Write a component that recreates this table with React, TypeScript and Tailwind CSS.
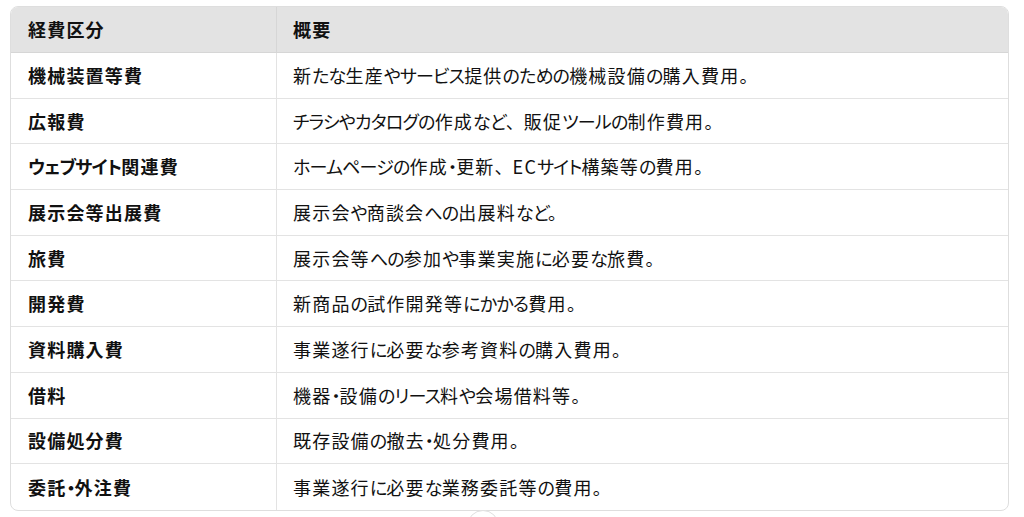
import React from "react";

const rows: [string, string][] = [
  ["機械装置等費", "新たな生産やサービス提供のための機械設備の購入費用。"],
  ["広報費", "チラシやカタログの作成など、販促ツールの制作費用。"],
  ["ウェブサイト関連費", "ホームページの作成・更新、ECサイト構築等の費用。"],
  ["展示会等出展費", "展示会や商談会への出展料など。"],
  ["旅費", "展示会等への参加や事業実施に必要な旅費。"],
  ["開発費", "新商品の試作開発等にかかる費用。"],
  ["資料購入費", "事業遂行に必要な参考資料の購入費用。"],
  ["借料", "機器・設備のリース料や会場借料等。"],
  ["設備処分費", "既存設備の撤去・処分費用。"],
  ["委託・外注費", "事業遂行に必要な業務委託等の費用。"],
];

function Jp({ text }: { text: string }) {
  const parts = text.split(/(、|[\u3040-\u30ff\u3000\u3002-\u303f]+)/).filter((p) => p && p.length > 0);
  return (
    <span>
      {parts.map((p, i) => {
        if (p === "、")
          return (
            <span key={i} className="[font-feature-settings:normal] tracking-[0px]">
              {p}
            </span>
          );
        if (/^[\u3040-\u30ff\u3000-\u303f]+$/.test(p))
          return (
            <span key={i} className="tracking-[-0.8px]">
              {p}
            </span>
          );
        return <span key={i}>{p}</span>;
      })}
    </span>
  );
}

export default function App() {
  return (
    <div
      className="relative w-[1024px] h-[517px] overflow-hidden bg-white pl-[10px] pt-[6px] text-[#111111] [font-feature-settings:'palt'] tracking-[1.2px]"
      style={{ fontFamily: '"Noto Sans CJK JP", "Noto Sans", sans-serif' }}
    >
      <div className="w-[999px] overflow-hidden rounded-[8px] border border-[#dedede]">
        <div className="grid grid-cols-[266px_1fr] h-[46px] bg-[#e3e3e3] border-b border-[#d6d6d6] text-[18px] font-bold">
          <div className="flex items-center pl-[17px] border-r border-[#d6d6d6]">経費区分</div>
          <div className="flex items-center pl-[16px]">概要</div>
        </div>
        {rows.map(([a, b], i) => (
          <div
            key={i}
            className={
              "grid grid-cols-[266px_1fr] h-[45.7px] text-[18px] " +
              (i < rows.length - 1 ? "border-b border-[#e3e3e3]" : "")
            }
          >
            <div className="flex items-center pl-[17px] border-r border-[#e3e3e3] font-bold">
              <Jp text={a} />
            </div>
            <div className="flex items-center pl-[16px]">
              <Jp text={b} />
            </div>
          </div>
        ))}
      </div>
      <div className="absolute left-[467px] top-[510px] w-[32px] h-[32px] rounded-full border border-[#e0e0e0] bg-white" />
    </div>
  );
}
